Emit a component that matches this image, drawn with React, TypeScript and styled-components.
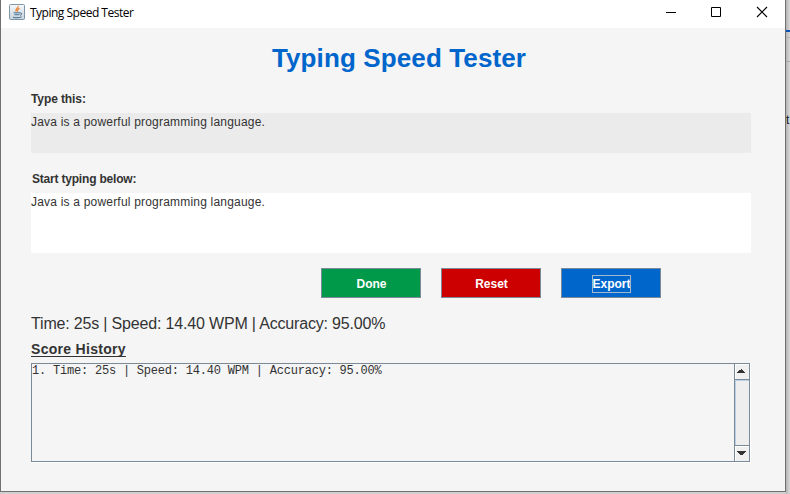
import React from "react";
import styled, { createGlobalStyle } from "styled-components";

const GlobalStyle = createGlobalStyle`
  * { box-sizing: border-box; }
  html, body { margin: 0; padding: 0; }
  body { width: 790px; height: 494px; overflow: hidden; background: #d2d2d2; }
`;

const Desktop = styled.div`
  width: 790px;
  height: 494px;
  display: flex;
  overflow: hidden;
  background: linear-gradient(#b9b9b9, #d0d0d0);
`;

const Frame = styled.main`
  width: 786px;
  height: 492px;
  flex: none;
  display: flex;
  flex-direction: column;
  border: solid #707070;
  border-width: 0 1px 1px 1px;
  background: #f5f5f5;
  color: #333;
  font-family: "Liberation Sans", Arial, sans-serif;
`;

const Behind = styled.aside`
  width: 4px;
  height: 494px;
  flex: none;
  background: linear-gradient(90deg, #b4b4b4, #d9d9d9);
  color: #10202a;
  font: 12px/14px "Liberation Sans", Arial, sans-serif;
`;

const BehindTop = styled.div`
  height: 62px;
  margin-bottom: 51px;
  background: linear-gradient(transparent 30px, #0b52b8 30px, #0b52b8 32px, transparent 32px, transparent 37px, #b3b3b3 37px, #b3b3b3 38px, transparent 38px, transparent 61px, #a9a9a9 61px);
`;

const BehindText = styled.span`
  display: block;
`;

const TitleBar = styled.header`
  height: 28px;
  flex: none;
  display: flex;
  align-items: flex-start;
  background: #fff;
  color: #000;
`;

const AppIcon = styled.svg`
  width: 16px;
  height: 16px;
  margin: 4px 0 0 8px;
`;

const WindowTitle = styled.span`
  flex: 1;
  margin: 5px 0 0 5px;
  font: 12px/16px "Open Sans", "Noto Sans", sans-serif;
  letter-spacing: -0.5px;
  white-space: nowrap;
`;

const WindowControl = styled.svg`
  width: 46px;
  height: 28px;
  fill: none;
  stroke: #000;
`;

const Content = styled.section`
  flex: 1;
  display: flex;
  flex-direction: column;
  padding: 13px 34px 0 30px;
`;

const Heading = styled.h1`
  margin: 0 0 0 16px;
  height: 34px;
  text-align: center;
  color: #0066cc;
  font-size: 26px;
  line-height: 34px;
  font-weight: bold;
  letter-spacing: 0.12px;
`;

const Label = styled.label<{ $top: number; $indent?: number; $tracking: number }>`
  height: 16px;
  margin: ${(p) => p.$top}px 0 6px ${(p) => p.$indent ?? 0}px;
  font-size: 12px;
  line-height: 16px;
  font-weight: bold;
  letter-spacing: ${(p) => p.$tracking}px;
`;

const TextPanel = styled.div<{ $height: number; $fill: string }>`
  height: ${(p) => p.$height}px;
  padding-top: 1px;
  background: ${(p) => p.$fill};
  font-size: 12px;
  line-height: 16px;
  letter-spacing: 0.2px;
`;

const Buttons = styled.div`
  display: flex;
  gap: 20px;
  margin: 15px 0 0 290px;
`;

const ActionButton = styled.button<{ $fill: string }>`
  width: 100px;
  height: 30px;
  display: flex;
  align-items: center;
  justify-content: center;
  padding: 1px 0 0 1px;
  border: 1px solid #7a8a99;
  border-radius: 0;
  background: ${(p) => p.$fill};
  color: #fff;
  font: bold 12px/16px "Liberation Sans", Arial, sans-serif;
`;

const FocusRing = styled.span`
  height: 18px;
  line-height: 18px;
  outline: 1px solid #a3b8cc;
  outline-offset: -1px;
`;

const Result = styled.p`
  height: 20px;
  margin: 16px 0 0;
  font-size: 16px;
  line-height: 20px;
  letter-spacing: -0.175px;
  white-space: nowrap;
`;

const HistoryTitle = styled.h2`
  align-self: flex-start;
  height: 18px;
  margin: 6px 0 5px;
  font-size: 14px;
  line-height: 18px;
  font-weight: bold;
  letter-spacing: 0.3px;
  text-decoration: underline;
  text-decoration-thickness: 1px;
  text-underline-offset: 2px;
  text-decoration-skip-ink: none;
`;

const ScrollPane = styled.div`
  width: 719px;
  height: 99px;
  display: flex;
  border: 1px solid #7a8a99;
  box-shadow: 1px 1px 0 #fff;
`;

const HistoryText = styled.pre`
  flex: 1;
  margin: 0;
  color: #333;
  font: 12px/14px "Liberation Mono", "Courier New", monospace;
  letter-spacing: -0.21px;
`;

const ScrollBar = styled.div`
  width: 15px;
  display: flex;
  flex-direction: column;
  border-left: 1px solid #7a8a99;
`;

const ScrollButton = styled.svg`
  width: 14px;
  height: 15px;
  flex: none;
  border-top: 1px solid #fff;
  border-left: 1px solid #fff;
  background: #f0f0f0;
`;

const ScrollTrack = styled.div`
  flex: 1;
  border: solid #7a8a99;
  border-width: 1px 0;
  background: #eee;
  box-shadow: inset 1px 1px 0 #b8cfe5;
`;

export default function App() {
  return (
    <Desktop>
      <GlobalStyle />
      <Frame>
        <TitleBar>
          <AppIcon viewBox="0 0 16 16">
            <defs>
              <linearGradient id="tile" x2="0" y2="1">
                <stop stopColor="#f6f8fa" />
                <stop offset="1" stopColor="#c5d2dc" />
              </linearGradient>
            </defs>
            <rect x=".5" y=".5" width="15" height="15" rx="1" fill="url(#tile)" stroke="#8095a6" />
            <path d="M9.2 2C9.8 4.2 5.6 4.5 7.3 7.6M10.5 4.4C8.6 5.2 8 6 8.8 7.6" fill="none" stroke="#ed7b25" strokeWidth="1.2" />
            <path d="M4.5 8.8h6.5M5.4 10.7h5M4 13.2c2 .8 6 .8 8.5-.3M11 9c2.5-.5 2 2 .1 2.3" fill="none" stroke="#456f91" strokeWidth="1" />
          </AppIcon>
          <WindowTitle>Typing Speed Tester</WindowTitle>
          <WindowControl viewBox="0 0 46 28"><path d="M19 12.5h10" /></WindowControl>
          <WindowControl viewBox="0 0 46 28"><path d="M18.5 7.5h9v9h-9z" /></WindowControl>
          <WindowControl viewBox="0 0 46 28"><path d="M18 7l10 10M28 7L18 17" strokeWidth="1.1" /></WindowControl>
        </TitleBar>
        <Content>
          <Heading>Typing Speed Tester</Heading>
          <Label $top={16} $tracking={-0.1}>Type this:</Label>
          <TextPanel $height={40} $fill="#ebebeb">Java is a powerful programming language.</TextPanel>
          <Label $top={18} $indent={1} $tracking={-0.2}>Start typing below:</Label>
          <TextPanel $height={60} $fill="#fff">Java is a powerful programming langauge.</TextPanel>
          <Buttons>
            <ActionButton $fill="#009949">Done</ActionButton>
            <ActionButton $fill="#cc0000">Reset</ActionButton>
            <ActionButton $fill="#0066cc"><FocusRing>Export</FocusRing></ActionButton>
          </Buttons>
          <Result>Time: 25s | Speed: 14.40 WPM | Accuracy: 95.00%</Result>
          <HistoryTitle>Score History</HistoryTitle>
          <ScrollPane>
            <HistoryText>1. Time: 25s | Speed: 14.40 WPM | Accuracy: 95.00%</HistoryText>
            <ScrollBar>
              <ScrollButton viewBox="0 0 13 14"><path d="M5 4h1v1h1v1h1v1h1v1H1V7h1V6h1V5h2z" fill="#333" /></ScrollButton>
              <ScrollTrack />
              <ScrollButton viewBox="0 0 13 14"><path d="M1 4h9v1H9v1H8v1H7v1H4V7H3V6H2V5H1z" fill="#333" /></ScrollButton>
            </ScrollBar>
          </ScrollPane>
        </Content>
      </Frame>
      <Behind>
        <BehindTop />
        <BehindText>t</BehindText>
      </Behind>
    </Desktop>
  );
}
